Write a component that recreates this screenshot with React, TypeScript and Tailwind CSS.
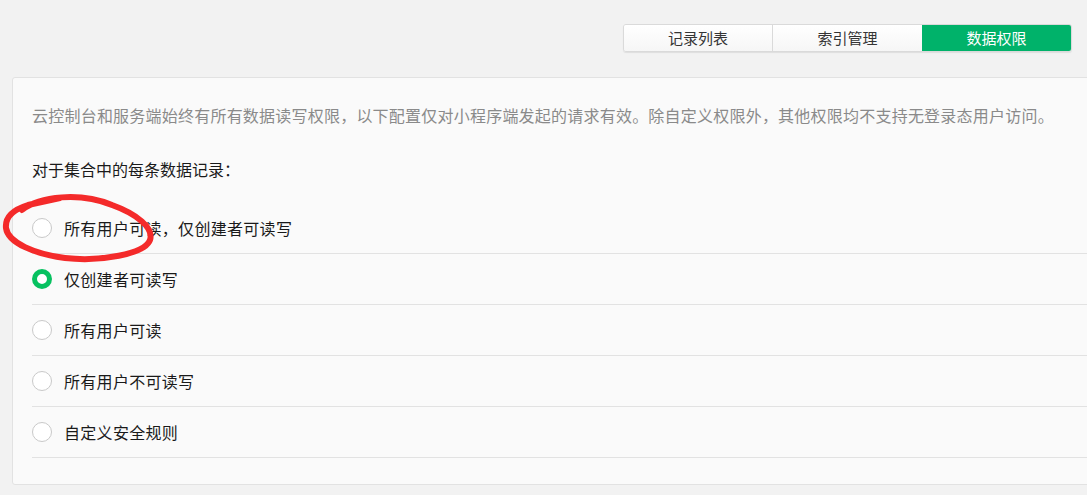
import React from "react";

const options = [
  { label: "所有用户可读，仅创建者可读写", checked: false },
  { label: "仅创建者可读写", checked: true },
  { label: "所有用户可读", checked: false },
  { label: "所有用户不可读写", checked: false },
  { label: "自定义安全规则", checked: false },
];

const font = { fontFamily: '"Noto Sans CJK SC", "Noto Sans", sans-serif' };

export default function App() {
  return (
    <div
      className="relative w-full h-[495px] overflow-hidden bg-[#f2f2f2]"
      style={font}
    >
      <div className="flex justify-end pt-[24px] pr-[15px]">
        <div className="flex h-[28px] rounded-[3px] border border-[#dadada] shadow-[0_1px_1px_rgba(0,0,0,0.08)] overflow-hidden">
          <button className="w-[149px] h-full flex items-center justify-center text-[15px] text-[#353535] bg-gradient-to-b from-[#ffffff] to-[#f6f6f6] border-r border-[#dadada]">
            记录列表
          </button>
          <button className="w-[149px] h-full flex items-center justify-center text-[15px] text-[#353535] bg-gradient-to-b from-[#ffffff] to-[#f6f6f6]">
            索引管理
          </button>
          <button className="w-[149px] h-full flex items-center justify-center text-[15px] text-white bg-[#00b26a]">
            数据权限
          </button>
        </div>
      </div>

      <div className="ml-[12px] mt-[25px] w-[1100px] rounded-[3px] border border-[#e2e2e2] bg-[#fafafa] pt-[25px] pb-[26px] pl-[19px]">
        <p className="text-[16px] leading-[24px] text-[#8a8a8a] tracking-[0.22px]">
          云控制台和服务端始终有所有数据读写权限，以下配置仅对小程序端发起的请求有效。除自定义权限外，其他权限均不支持无登录态用户访问。
        </p>
        <p className="mt-[30px] text-[16px] leading-[24px] text-[#1a1a1a]">
          对于集合中的每条数据记录：
        </p>
        <div className="mt-[22px]">
          {options.map((o) => (
            <div
              key={o.label}
              className="flex items-center h-[51px] border-b border-[#e2e2e2]"
            >
              {o.checked ? (
                <span className="w-[20px] h-[20px] rounded-full border-[5px] border-[#07c160] bg-white" />
              ) : (
                <span className="w-[20px] h-[20px] rounded-full border border-[#c9c9c9] bg-white" />
              )}
              <span className="ml-[12px] text-[16px] leading-[24px] text-[#1a1a1a] tracking-[0.3px]">
                {o.label}
              </span>
            </div>
          ))}
        </div>
      </div>

      <svg
        className="absolute left-0 top-0 pointer-events-none"
        width="200"
        height="280"
        viewBox="0 0 200 280"
      >
        <path
          d="M 22 210 C 40 196, 80 192, 112 205 C 137 214, 154 228, 150 240 C 145 254, 100 262, 65 258 C 35 254, 8 243, 6 228 C 5 218, 12 210, 28 205 L 60 198"
          fill="none"
          stroke="#f42a2a"
          strokeWidth="6"
          strokeLinecap="round"
          strokeLinejoin="round"
        />
      </svg>
    </div>
  );
}
